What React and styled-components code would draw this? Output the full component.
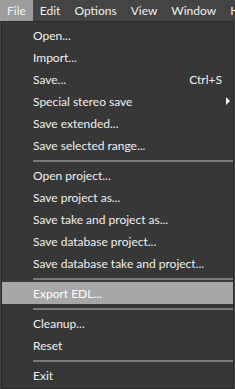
import React from 'react';
import styled, { createGlobalStyle } from 'styled-components';

const GlobalStyle = createGlobalStyle`
  html, body {
    margin: 0;
    padding: 0;
    background: #444444;
  }
  body {
    font-family: Lato, "Liberation Sans", Arial, sans-serif;
    font-size: 12px;
  }
`;

const menuTitles = ['File', 'Edit', 'Options', 'View', 'Window', 'Help'];

const items = [
  { label: 'Open...' },
  { label: 'Import...' },
  { label: 'Save...', shortcut: 'Ctrl+S' },
  { label: 'Special stereo save', submenu: true },
  { label: 'Save extended...' },
  { label: 'Save selected range...' },
  { separator: true },
  { label: 'Open project...' },
  { label: 'Save project as...' },
  { label: 'Save take and project as...' },
  { label: 'Save database project...' },
  { label: 'Save database take and project...' },
  { separator: true },
  { label: 'Export EDL...', hover: true },
  { separator: true },
  { label: 'Cleanup...' },
  { label: 'Reset' },
  { separator: true },
  { label: 'Exit' },
];

const App = () => {
  return (
    <>
      <GlobalStyle />
      <Page>
        <MenuBar>
          {menuTitles.map((t, i) => (
            <MenuTitle key={t} $active={i === 0}>{t}</MenuTitle>
          ))}
        </MenuBar>
        <Dropdown>
          {items.map((item, i) =>
            item.separator ? (
              <Separator key={i} />
            ) : (
              <Item key={i} $hover={item.hover}>
                <Label>{item.label}</Label>
                {item.shortcut && <Shortcut>{item.shortcut}</Shortcut>}
                <Trail>{item.submenu && <Arrow />}</Trail>
              </Item>
            )
          )}
        </Dropdown>
      </Page>
    </>
  );
};

const Page = styled.div`
  width: 235px;
  height: 389px;
  overflow: hidden;
  background: #444444;
`;

const MenuBar = styled.div`
  display: flex;
  height: 21px;
  white-space: nowrap;
`;

const MenuTitle = styled.div`
  flex-shrink: 0;
  padding: 0 7px;
  line-height: 21px;
  color: #f0f0f0;
  background: ${p => (p.$active ? '#9d9d9d' : 'transparent')};
`;

const Dropdown = styled.div`
  margin-left: 1px;
  width: 231px;
  padding: 2px 0;
  background: #373737;
  border: 1px solid #2b2b2b;
`;

const Item = styled.div`
  display: flex;
  align-items: center;
  height: 22px;
  padding-left: 31px;
  color: ${p => (p.$hover ? '#ffffff' : '#f0f0f0')};
  background: ${p => (p.$hover ? '#a7a7a7' : 'transparent')};
  white-space: nowrap;
`;

const Label = styled.span`
  flex: 1;
`;

const Shortcut = styled.span`
  color: #f0f0f0;
`;

const Trail = styled.span`
  width: 11px;
  display: flex;
  justify-content: center;
`;

const Arrow = styled.span`
  width: 0;
  height: 0;
  border-top: 4px solid transparent;
  border-bottom: 4px solid transparent;
  border-left: 4px solid #f4f4f4;
`;

const Separator = styled.div`
  height: 2px;
  margin: 4px 0 2px 31px;
  background: #7b7b7b;
`;

export default App;
